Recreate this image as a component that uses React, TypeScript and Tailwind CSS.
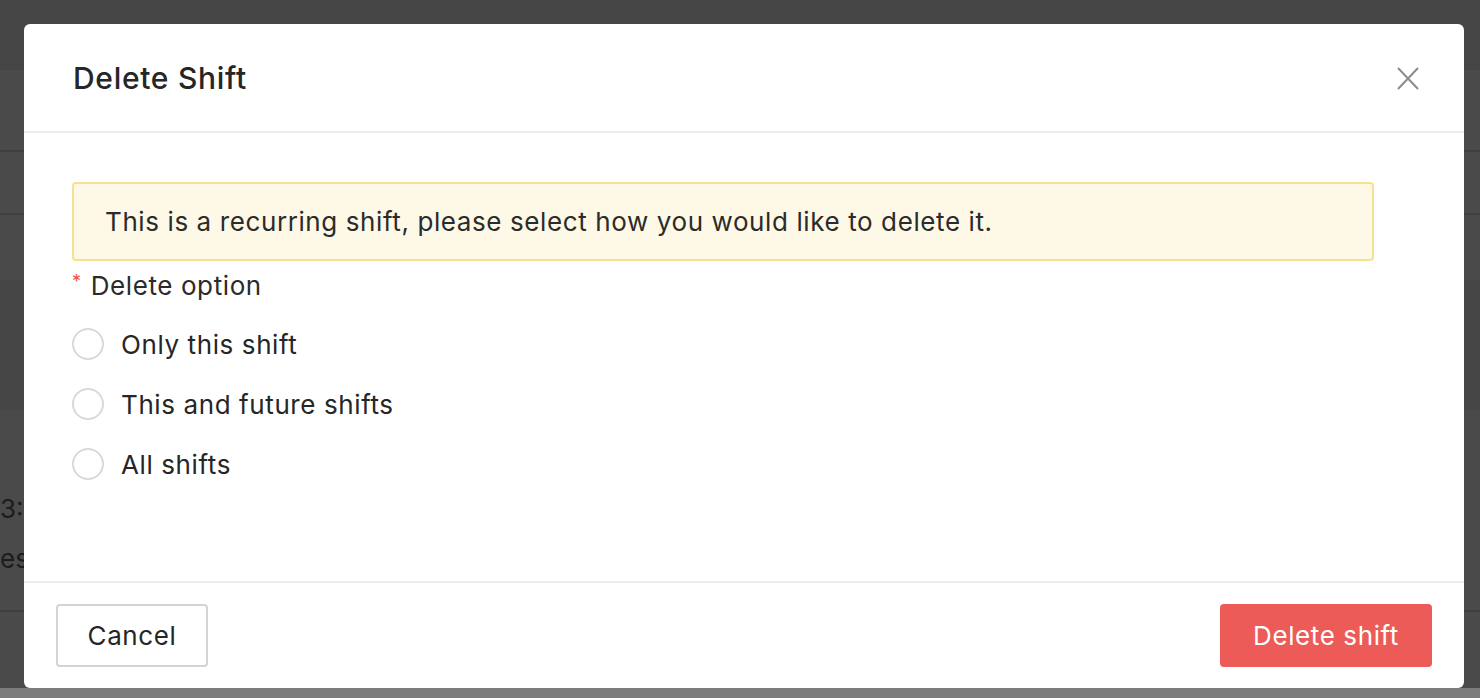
import { useState } from "react";

const options = ["Only this shift", "This and future shifts", "All shifts"];

export default function App() {
  const [selected, setSelected] = useState<string | null>(null);

  return (
    <div
      className="relative w-[1480px] h-[698px] overflow-hidden bg-[#4a4a4a]"
      style={{ fontFamily: "Inter, 'Noto Sans', sans-serif" }}
    >
      {/* Page behind the overlay */}
      <div className="flex flex-col h-full">
        <div className="h-[70px] bg-[#454545]" />
        <div className="h-[82px] border-b-2 border-[#3f3f3f]" />
        <div className="h-[63px] border-b-2 border-[#3f3f3f]" />
        <div className="h-[65px]" />
        <div className="h-[130px] bg-[#464646]" />
        <div className="h-[200px] flex flex-col justify-end pb-[26px] text-[26px] leading-[50px] text-[#1c1c1c]">
          <span>3:30</span>
          <span>es</span>
        </div>
        <div className="h-[78px] border-t-2 border-[#3f3f3f]" />
        <div className="flex-1 bg-[#7b7b7b]" />
      </div>

      {/* Modal */}
      <div className="absolute left-[24px] top-[24px] w-[1440px] h-[664px] bg-white rounded-[6px] flex flex-col">
        {/* Header */}
        <div className="h-[109px] flex items-center justify-between pl-[49px] pr-[40px] border-b-2 border-[#ececec]">
          <h2 className="text-[30px] font-medium text-[#262626] tracking-[0.7px] pt-[2px]">Delete Shift</h2>
          <button className="w-[32px] h-[32px] flex items-center justify-center mt-[2px]">
            <svg width="22" height="23" viewBox="0 0 22 23" fill="none" stroke="#8c8c8c" strokeWidth={2}>
              <path d="M1 1l20 21M21 1L1 22" />
            </svg>
          </button>
        </div>

        {/* Body */}
        <div className="flex-1 px-[48px] pt-[49px] border-b-2 border-[#ececec] tracking-[0.6px]">
          <div className="w-[1302px] h-[79px] flex items-center px-[31px] bg-[#fdf9e6] border-2 border-[#f7e08f] rounded-[4px] text-[26px] text-[#2b2b2b]">
            This is a recurring shift, please select how you would like to delete it.
          </div>

          <div className="mt-[8px] h-[32px] flex items-center text-[26px] text-[#2b2b2b]">
            <span className="text-[#f0504a] text-[18px] mr-[9px] -mt-[8px]">*</span>
            Delete option
          </div>

          <div className="mt-[27px] flex flex-col gap-[28px]">
            {options.map((opt) => (
              <label key={opt} className="flex items-center gap-[17px] h-[32px] cursor-pointer" onClick={() => setSelected(opt)}>
                <span className="w-[32px] h-[32px] rounded-full border-2 border-[#d9d9d9] flex items-center justify-center">
                  {selected === opt && <span className="w-[16px] h-[16px] rounded-full bg-[#ec5b57]" />}
                </span>
                <span className="text-[26px] text-[#262626]">{opt}</span>
              </label>
            ))}
          </div>
        </div>

        {/* Footer */}
        <div className="h-[105px] flex items-center justify-between px-[32px] tracking-[0.6px]">
          <button className="w-[152px] h-[63px] border-2 border-[#d4d4d4] rounded-[4px] text-[26px] text-[#262626] bg-white">
            Cancel
          </button>
          <button className="w-[212px] h-[63px] rounded-[4px] text-[26px] text-white bg-[#ec5b57]">
            Delete shift
          </button>
        </div>
      </div>
    </div>
  );
}
